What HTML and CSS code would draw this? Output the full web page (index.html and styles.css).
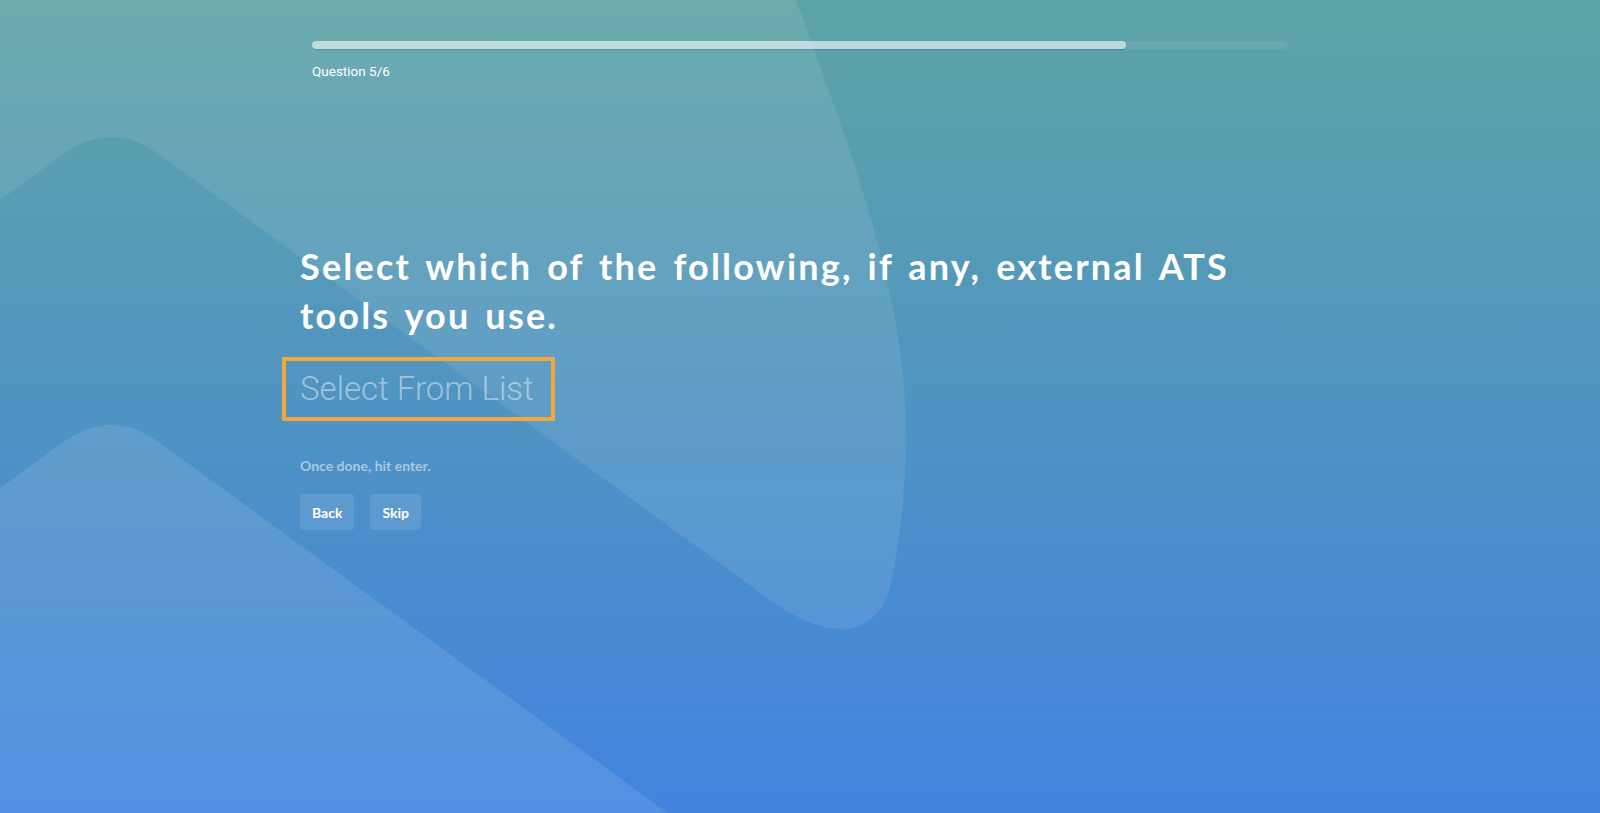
FILE: index.html
```html
<!DOCTYPE html>
<html lang="en">

<head>
  <meta charset="UTF-8" />
  <meta name="viewport" content="width=device-width, initial-scale=1.0" />
  <title>Onboarding Question</title>
  <link rel="stylesheet" href="styles.css">
</head>

<body>
  <!-- background shapes -->
  <svg class="backdrop" viewBox="0 0 1600 813" preserveAspectRatio="none" aria-hidden="true">
    <path class="shape-top" d="M0,0 L796,0 C850,150 910,300 906,450 C904,510 897,560 889,590 C881,620 848,655 770,600 L160,155 Q111,119 62,155 L0,200 Z" />
    <path class="shape-bottom" d="M0,488 L62,443 Q111,407 160,443 L668,813 L0,813 Z" />
  </svg>

  <main class="quiz">
    <div class="progress">
      <div class="progress-track">
        <div class="progress-fill" style="width: 83.4%"></div>
      </div>
      <div class="progress-label">Question 5/6</div>
    </div>

    <section class="question">
      <h1 class="question-title">Select which of the following, if any, external ATS tools you use.</h1>
      <div class="select-box">Select From List</div>
      <p class="hint">Once done, hit enter.</p>
      <div class="actions">
        <button class="btn">Back</button>
        <button class="btn">Skip</button>
      </div>
    </section>
  </main>
</body>

</html>
```

FILE: styles.css
```css
html,
body {
  height: 100%;
}

body {
  margin: 0;
  padding: 0;
  position: relative;
  overflow: hidden;
  background: linear-gradient(180deg, #5ea4a6 0%, #4283df 100%);
  color: #ffffff;
  font-family: 'Lato', 'Noto Sans', sans-serif;
}

.backdrop {
  position: absolute;
  top: 0;
  left: 0;
  width: 100%;
  height: 100%;
  z-index: 0;
}

.shape-top {
  fill: rgba(255, 255, 255, 0.09);
}

.shape-bottom {
  fill: rgba(255, 255, 255, 0.1);
}

.quiz {
  position: relative;
  z-index: 1;
  width: 1000px;
  margin: 0 auto;
  padding-top: 41px;
}

.progress {
  padding: 0 12px;
}

.progress-track {
  height: 8px;
  border-radius: 4px;
  background-color: rgba(255, 255, 255, 0.08);
}

.progress-fill {
  height: 100%;
  border-radius: 4px;
  background-color: rgba(255, 255, 255, 0.55);
  box-shadow: 0 1px 1px rgba(0, 0, 0, 0.15);
}

.progress-label {
  margin-top: 14px;
  font-family: 'Roboto', sans-serif;
  font-size: 13.5px;
  line-height: 16px;
}

.question {
  margin-top: 163px;
}

.question-title {
  max-width: 976px;
  margin: 0;
  font-size: 36px;
  font-weight: 700;
  line-height: 49px;
  letter-spacing: 2.2px;
  word-spacing: 4px;
}

.select-box {
  display: inline-block;
  margin: 17px 0 0 -18px;
  padding: 0 17px 0 14px;
  border: 4px solid #f2a83b;
  font-family: 'Roboto', sans-serif;
  font-size: 33px;
  font-weight: 300;
  line-height: 56px;
  color: rgba(255, 255, 255, 0.45);
}

.hint {
  margin: 35px 0 0;
  font-size: 14px;
  font-weight: 700;
  line-height: 20px;
  color: rgba(255, 255, 255, 0.5);
}

.actions {
  display: flex;
  gap: 16px;
  margin-top: 18px;
}

.btn {
  height: 36px;
  padding: 0 12px;
  border: none;
  border-radius: 3px;
  background-color: rgba(255, 255, 255, 0.1);
  color: #ffffff;
  font-family: 'Lato', sans-serif;
  font-size: 14px;
  font-weight: 700;
  cursor: pointer;
}
```
